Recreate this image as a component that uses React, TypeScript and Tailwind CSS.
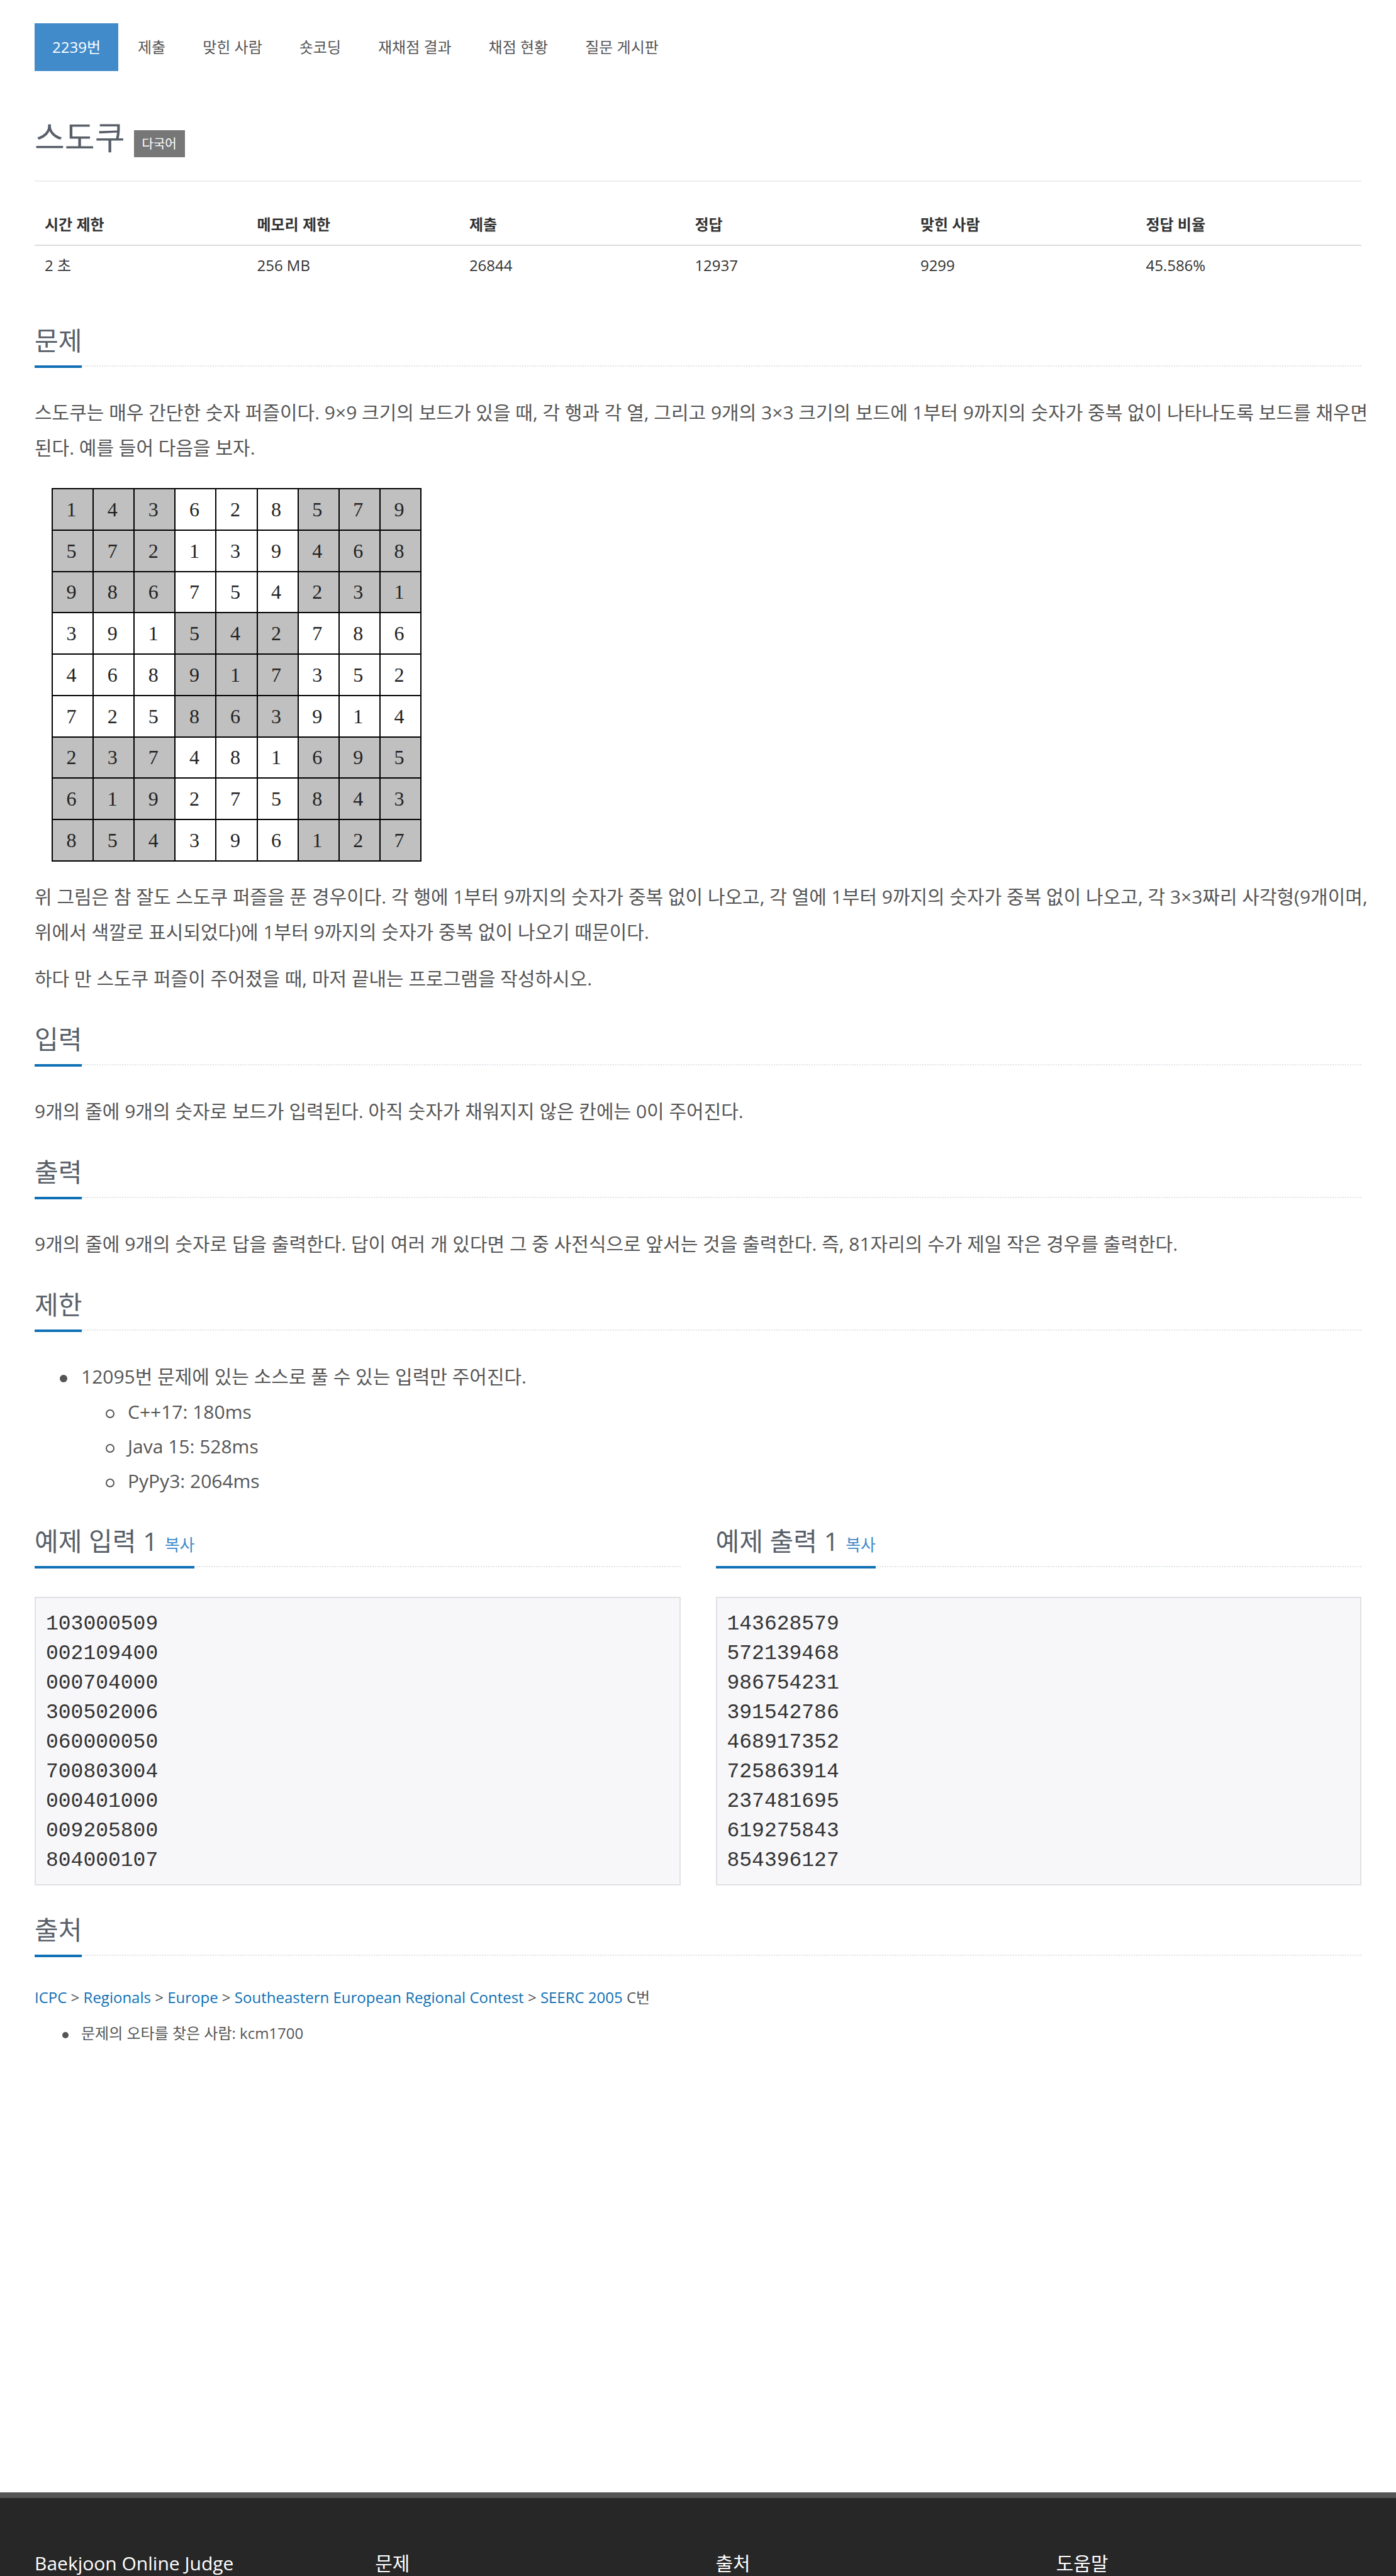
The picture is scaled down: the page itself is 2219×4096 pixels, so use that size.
import type { ReactNode } from "react";

const tabs = ["2239번", "제출", "맞힌 사람", "숏코딩", "재채점 결과", "채점 현황", "질문 게시판"];

const info = [
  { label: "시간 제한", value: "2 초", width: "w-[16%]" },
  { label: "메모리 제한", value: "256 MB", width: "w-[16%]" },
  { label: "제출", value: "26844", width: "w-[17%]" },
  { label: "정답", value: "12937", width: "w-[17%]" },
  { label: "맞힌 사람", value: "9299", width: "w-[17%]" },
  { label: "정답 비율", value: "45.586%", width: "w-[17%]" },
];

const solved = [
  "143628579",
  "572139468",
  "986754231",
  "391542786",
  "468917352",
  "725863914",
  "237481695",
  "619275843",
  "854396127",
];

const puzzle = [
  "103000509",
  "002109400",
  "000704000",
  "300502006",
  "060000050",
  "700803004",
  "000401000",
  "009205800",
  "804000107",
];

const limits = ["C++17: 180ms", "Java 15: 528ms", "PyPy3: 2064ms"];

const sources = ["ICPC", "Regionals", "Europe", "Southeastern European Regional Contest", "SEERC 2005"];

const footerColumns = ["Baekjoon Online Judge", "문제", "출처", "도움말"];

function Headline({ title, action }: { title: string; action?: ReactNode }) {
  return (
    <div className="mb-[45px] flex border-b-2 border-dotted border-[#dfe3e8]">
      <h2 className="-mb-1 border-b-4 border-[#0f70b5] pb-3 text-[41px] leading-[56px] text-[#585f69]">
        {title}
        {action}
      </h2>
    </div>
  );
}

function Section({ title, children }: { title: string; children: ReactNode }) {
  return (
    <section className="mb-10">
      <Headline title={title} />
      {children}
    </section>
  );
}

function Board() {
  return (
    <table className="mb-7 ml-[27px] mt-9 h-[594px] w-[588px] table-fixed border-collapse border-2 border-black text-center font-['Liberation_Serif',serif] text-[32px] leading-8 text-[#222]">
      <tbody>
        {solved.map((row, r) => (
          <tr key={row}>
            {row.split("").map((digit, c) => {
              const shaded = (Math.floor(r / 3) + Math.floor(c / 3)) % 2 === 0;
              return (
                <td
                  key={c}
                  className={
                    shaded ? "border-2 border-black bg-[#c0c0c0] p-0 pr-1" : "border-2 border-black bg-white p-0 pr-1"
                  }
                >
                  {digit}
                </td>
              );
            })}
          </tr>
        ))}
      </tbody>
    </table>
  );
}

function Sample({ title, lines }: { title: string; lines: string[] }) {
  return (
    <section>
      <Headline
        title={title}
        action={
          <button type="button" className="ml-[11px] text-[26px] leading-8 text-[#428bca]">
            복사
          </button>
        }
      />
      <pre className="mt-[47px] border-2 border-[#e0e1e5] bg-[#f7f7fa] px-4 pb-3.5 pt-[18px] font-['Liberation_Mono',monospace] text-[33px] leading-[47px] text-[#333]">
        {lines.join("\n")}
      </pre>
    </section>
  );
}

export default function App() {
  return (
    <div className="bg-white font-['Open_Sans','Noto_Sans_CJK_KR',sans-serif] text-[24px] leading-9 text-[#555]">
      <main className="px-[55px] pb-[712px] pt-[37px]">
        <nav className="flex gap-[3px]">
          {tabs.map((tab, i) => (
            <a
              key={tab}
              href="#"
              className={i === 0 ? "bg-[#428bca] px-7 py-5 text-white" : "px-7 py-5"}
            >
              {tab}
            </a>
          ))}
        </nav>

        <header className="mb-[38px] mt-[61px] flex items-center gap-3.5 border-b-2 border-[#eee] pb-[25px]">
          <h1 className="text-[52px] leading-[88px] text-[#585f69]">스도쿠</h1>
          <span className="mt-5 bg-[#777] px-[13px] py-1 text-[20px] leading-[35px] text-white">다국어</span>
        </header>

        <table className="mb-[61px] w-full table-fixed border-collapse text-left text-[#333]">
          <thead>
            <tr className="border-b-2 border-[#ddd]">
              {info.map((item) => (
                <th key={item.label} scope="col" className={`${item.width} px-4 pb-3.5 pt-3 font-bold`}>
                  {item.label}
                </th>
              ))}
            </tr>
          </thead>
          <tbody>
            <tr>
              {info.map((item) => (
                <td key={item.label} className="px-4 pb-3 pt-[13px]">
                  {item.value}
                </td>
              ))}
            </tr>
          </tbody>
        </table>

        <div className="text-[30px] leading-[56px]">
          <Section title="문제">
            <p className="-mr-4">
              스도쿠는 매우 간단한 숫자 퍼즐이다. 9×9 크기의 보드가 있을 때, 각 행과 각 열, 그리고 9개의 3×3 크기의
              보드에 1부터 9까지의 숫자가 중복 없이 나타나도록 보드를 채우면 된다. 예를 들어 다음을 보자.
            </p>
            <Board />
            <p className="-mr-4 mb-[18px]">
              위 그림은 참 잘도 스도쿠 퍼즐을 푼 경우이다. 각 행에 1부터 9까지의 숫자가 중복 없이 나오고, 각 열에
              1부터 9까지의 숫자가 중복 없이 나오고, 각 3×3짜리 사각형(9개이며, 위에서 색깔로 표시되었다)에 1부터
              9까지의 숫자가 중복 없이 나오기 때문이다.
            </p>
            <p>하다 만 스도쿠 퍼즐이 주어졌을 때, 마저 끝내는 프로그램을 작성하시오.</p>
          </Section>

          <Section title="입력">
            <p>9개의 줄에 9개의 숫자로 보드가 입력된다. 아직 숫자가 채워지지 않은 칸에는 0이 주어진다.</p>
          </Section>

          <Section title="출력">
            <p>
              9개의 줄에 9개의 숫자로 답을 출력한다. 답이 여러 개 있다면 그 중 사전식으로 앞서는 것을 출력한다. 즉,
              81자리의 수가 제일 작은 경우를 출력한다.
            </p>
          </Section>

          <Section title="제한">
            <ul className="pl-[74px]">
              <li>
                <span className="-ml-[34px] mr-[22px] inline-block size-3 rounded-full bg-[#555] align-middle" />
                12095번 문제에 있는 소스로 풀 수 있는 입력만 주어진다.
                <ul className="pl-[74px] leading-[55px]">
                  {limits.map((limit) => (
                    <li key={limit}>
                      <span className="-ml-[35px] mr-[21px] inline-block size-3.5 rounded-full border-2 border-[#555] align-middle" />
                      {limit}
                    </li>
                  ))}
                </ul>
              </li>
            </ul>
          </Section>
        </div>

        <div className="mb-[42px] grid grid-cols-2 gap-14">
          <Sample title="예제 입력 1" lines={puzzle} />
          <Sample title="예제 출력 1" lines={solved} />
        </div>

        <section>
          <Headline title="출처" />
          <p className="mb-[21px] pt-[3px]">
            {sources.map((source, i) => (
              <span key={source}>
                <a href="#" className="text-[#0f70b5]">
                  {source}
                </a>
                {i < sources.length - 1 ? " > " : " C번"}
              </span>
            ))}
          </p>
          <ul className="pl-[74px]">
            <li>
              <span className="-ml-[30px] mr-5 inline-block size-2.5 rounded-full bg-[#555] align-middle" />
              문제의 오타를 찾은 사람: kcm1700
            </li>
          </ul>
        </section>
      </main>

      <footer className="grid grid-cols-4 gap-14 border-t-[9px] border-[#555] bg-[#272727] px-[55px] pt-[84px] text-[30px] leading-10 text-white">
        {footerColumns.map((column) => (
          <h2 key={column}>{column}</h2>
        ))}
      </footer>
    </div>
  );
}
